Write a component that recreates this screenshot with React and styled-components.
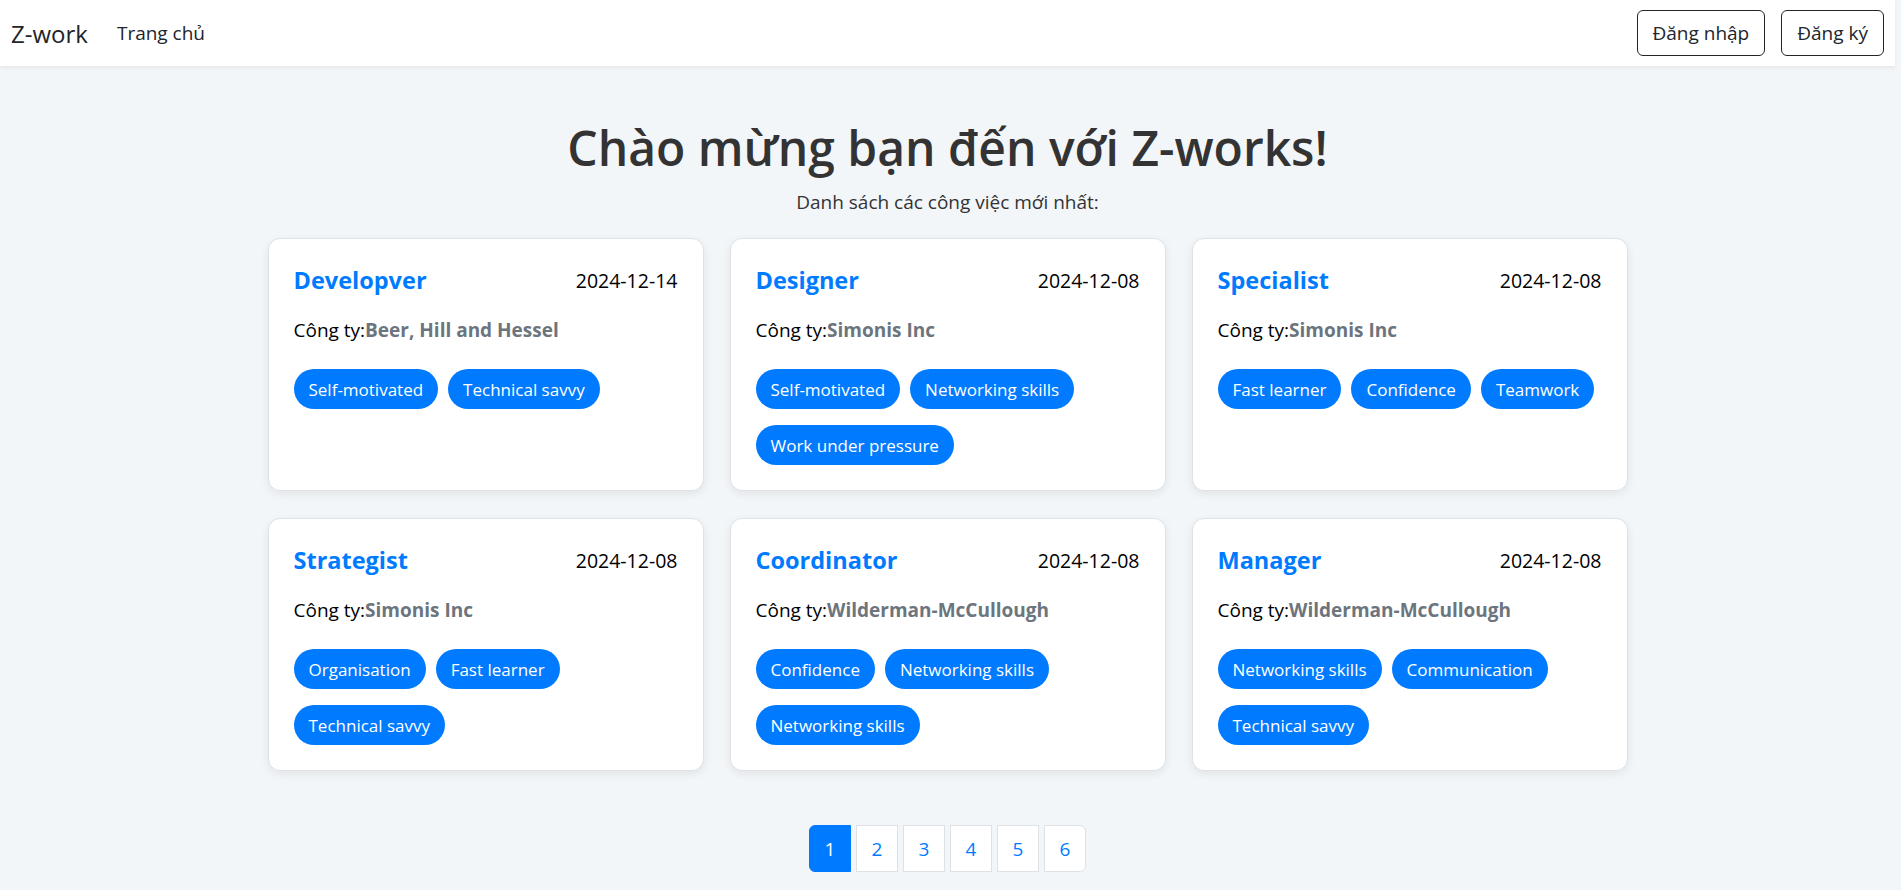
import styled, { createGlobalStyle } from 'styled-components';

const GlobalStyle = createGlobalStyle`
  * { box-sizing: border-box; }
  body {
    margin: 0;
    padding-right: 6px;
    background: #f3f6f9;
    font-family: 'Open Sans', 'Noto Sans', sans-serif;
    color: #212529;
  }
`;

const jobs = [
  { title: 'Developver', date: '2024-12-14', company: 'Beer, Hill and Hessel', skills: ['Self-motivated', 'Technical savvy'] },
  { title: 'Designer', date: '2024-12-08', company: 'Simonis Inc', skills: ['Self-motivated', 'Networking skills', 'Work under pressure'] },
  { title: 'Specialist', date: '2024-12-08', company: 'Simonis Inc', skills: ['Fast learner', 'Confidence', 'Teamwork'] },
  { title: 'Strategist', date: '2024-12-08', company: 'Simonis Inc', skills: ['Organisation', 'Fast learner', 'Technical savvy'] },
  { title: 'Coordinator', date: '2024-12-08', company: 'Wilderman-McCullough', skills: ['Confidence', 'Networking skills', 'Networking skills'] },
  { title: 'Manager', date: '2024-12-08', company: 'Wilderman-McCullough', skills: ['Networking skills', 'Communication', 'Technical savvy'] },
];

const App = () => {
  return (
    <>
      <GlobalStyle />
      <Navbar>
        <div className='left'>
          <Brand>Z-work</Brand>
          <NavLink>Trang chủ</NavLink>
        </div>
        <div className='right'>
          <OutlineButton>Đăng nhập</OutlineButton>
          <OutlineButton>Đăng ký</OutlineButton>
        </div>
      </Navbar>
      <Main>
        <Title>Chào mừng bạn đến với Z-works!</Title>
        <Subtitle>Danh sách các công việc mới nhất:</Subtitle>
        <JobGrid>
          {jobs.map((job, index) => (
            <JobCard key={index}>
              <div className='card-head'>
                <h5>{job.title}</h5>
                <span>{job.date}</span>
              </div>
              <p className='company'>
                Công ty:<b>{job.company}</b>
              </p>
              <SkillList>
                {job.skills.map((skill, i) => (
                  <Skill key={i}>{skill}</Skill>
                ))}
              </SkillList>
            </JobCard>
          ))}
        </JobGrid>
        <Pagination>
          {[1, 2, 3, 4, 5, 6].map((n) => (
            <PageItem key={n} $active={n === 1}>
              {n}
            </PageItem>
          ))}
        </Pagination>
      </Main>
    </>
  );
};

const Navbar = styled.nav`
  display: flex;
  justify-content: space-between;
  align-items: center;
  height: 66px;
  padding: 0 11px 0 11px;
  background-color: #fff;
  box-shadow: 0 2px 4px rgba(0, 0, 0, 0.06);
  .left {
    display: flex;
    align-items: center;
    gap: 29px;
  }
  .right {
    display: flex;
    gap: 16px;
  }
`;

const Brand = styled.a`
  font-size: 24px;
  color: #212529;
`;

const NavLink = styled.a`
  font-size: 19px;
  color: #212529;
`;

const OutlineButton = styled.button`
  height: 46px;
  padding: 0 15px;
  border: 1px solid #212529;
  border-radius: 6px;
  background-color: #fff;
  font-family: inherit;
  font-size: 19px;
  color: #212529;
`;

const Main = styled.main`
  display: flex;
  flex-direction: column;
  align-items: center;
  padding: 52px 0 20px;
`;

const Title = styled.h1`
  margin: 0;
  font-size: 48px;
  line-height: 60px;
  font-weight: 600;
  color: #333;
`;

const Subtitle = styled.p`
  margin: 9px 0 21px;
  font-size: 19px;
  line-height: 30px;
  color: #333;
`;

const JobGrid = styled.section`
  display: grid;
  grid-template-columns: repeat(3, 436px);
  gap: 27px 26px;
`;

const JobCard = styled.article`
  padding: 23px 25px 25px;
  background-color: #fff;
  border: 1px solid #dee2e6;
  border-radius: 12px;
  box-shadow: 0 3px 10px rgba(0, 0, 0, 0.07);
  .card-head {
    display: flex;
    justify-content: space-between;
    align-items: center;
    h5 {
      margin: 0;
      font-size: 23.5px;
      line-height: 36px;
      font-weight: 700;
      color: #007bff;
    }
    span {
      font-size: 19.5px;
      color: #000;
    }
  }
  .company {
    margin: 17px 0 24px;
    font-size: 19px;
    line-height: 30px;
    color: #000;
    b {
      color: #6c757d;
    }
  }
`;

const SkillList = styled.div`
  display: flex;
  flex-wrap: wrap;
  gap: 16px 10px;
`;

const Skill = styled.span`
  display: inline-flex;
  align-items: center;
  height: 40px;
  padding: 0 15px;
  border-radius: 20px;
  background-color: #007bff;
  font-size: 17px;
  color: #fff;
`;

const Pagination = styled.ul`
  display: flex;
  gap: 5px;
  margin: 54px 0 0;
  padding: 0;
  list-style: none;
`;

const PageItem = styled.li`
  display: flex;
  align-items: center;
  justify-content: center;
  width: 42px;
  height: 47px;
  border: 1px solid ${(p) => (p.$active ? '#007bff' : '#dee2e6')};
  background-color: ${(p) => (p.$active ? '#007bff' : '#fff')};
  color: ${(p) => (p.$active ? '#fff' : '#007bff')};
  font-size: 19px;
  &:first-child {
    border-radius: 6px 0 0 6px;
  }
  &:last-child {
    border-radius: 0 6px 6px 0;
  }
`;

export default App;
